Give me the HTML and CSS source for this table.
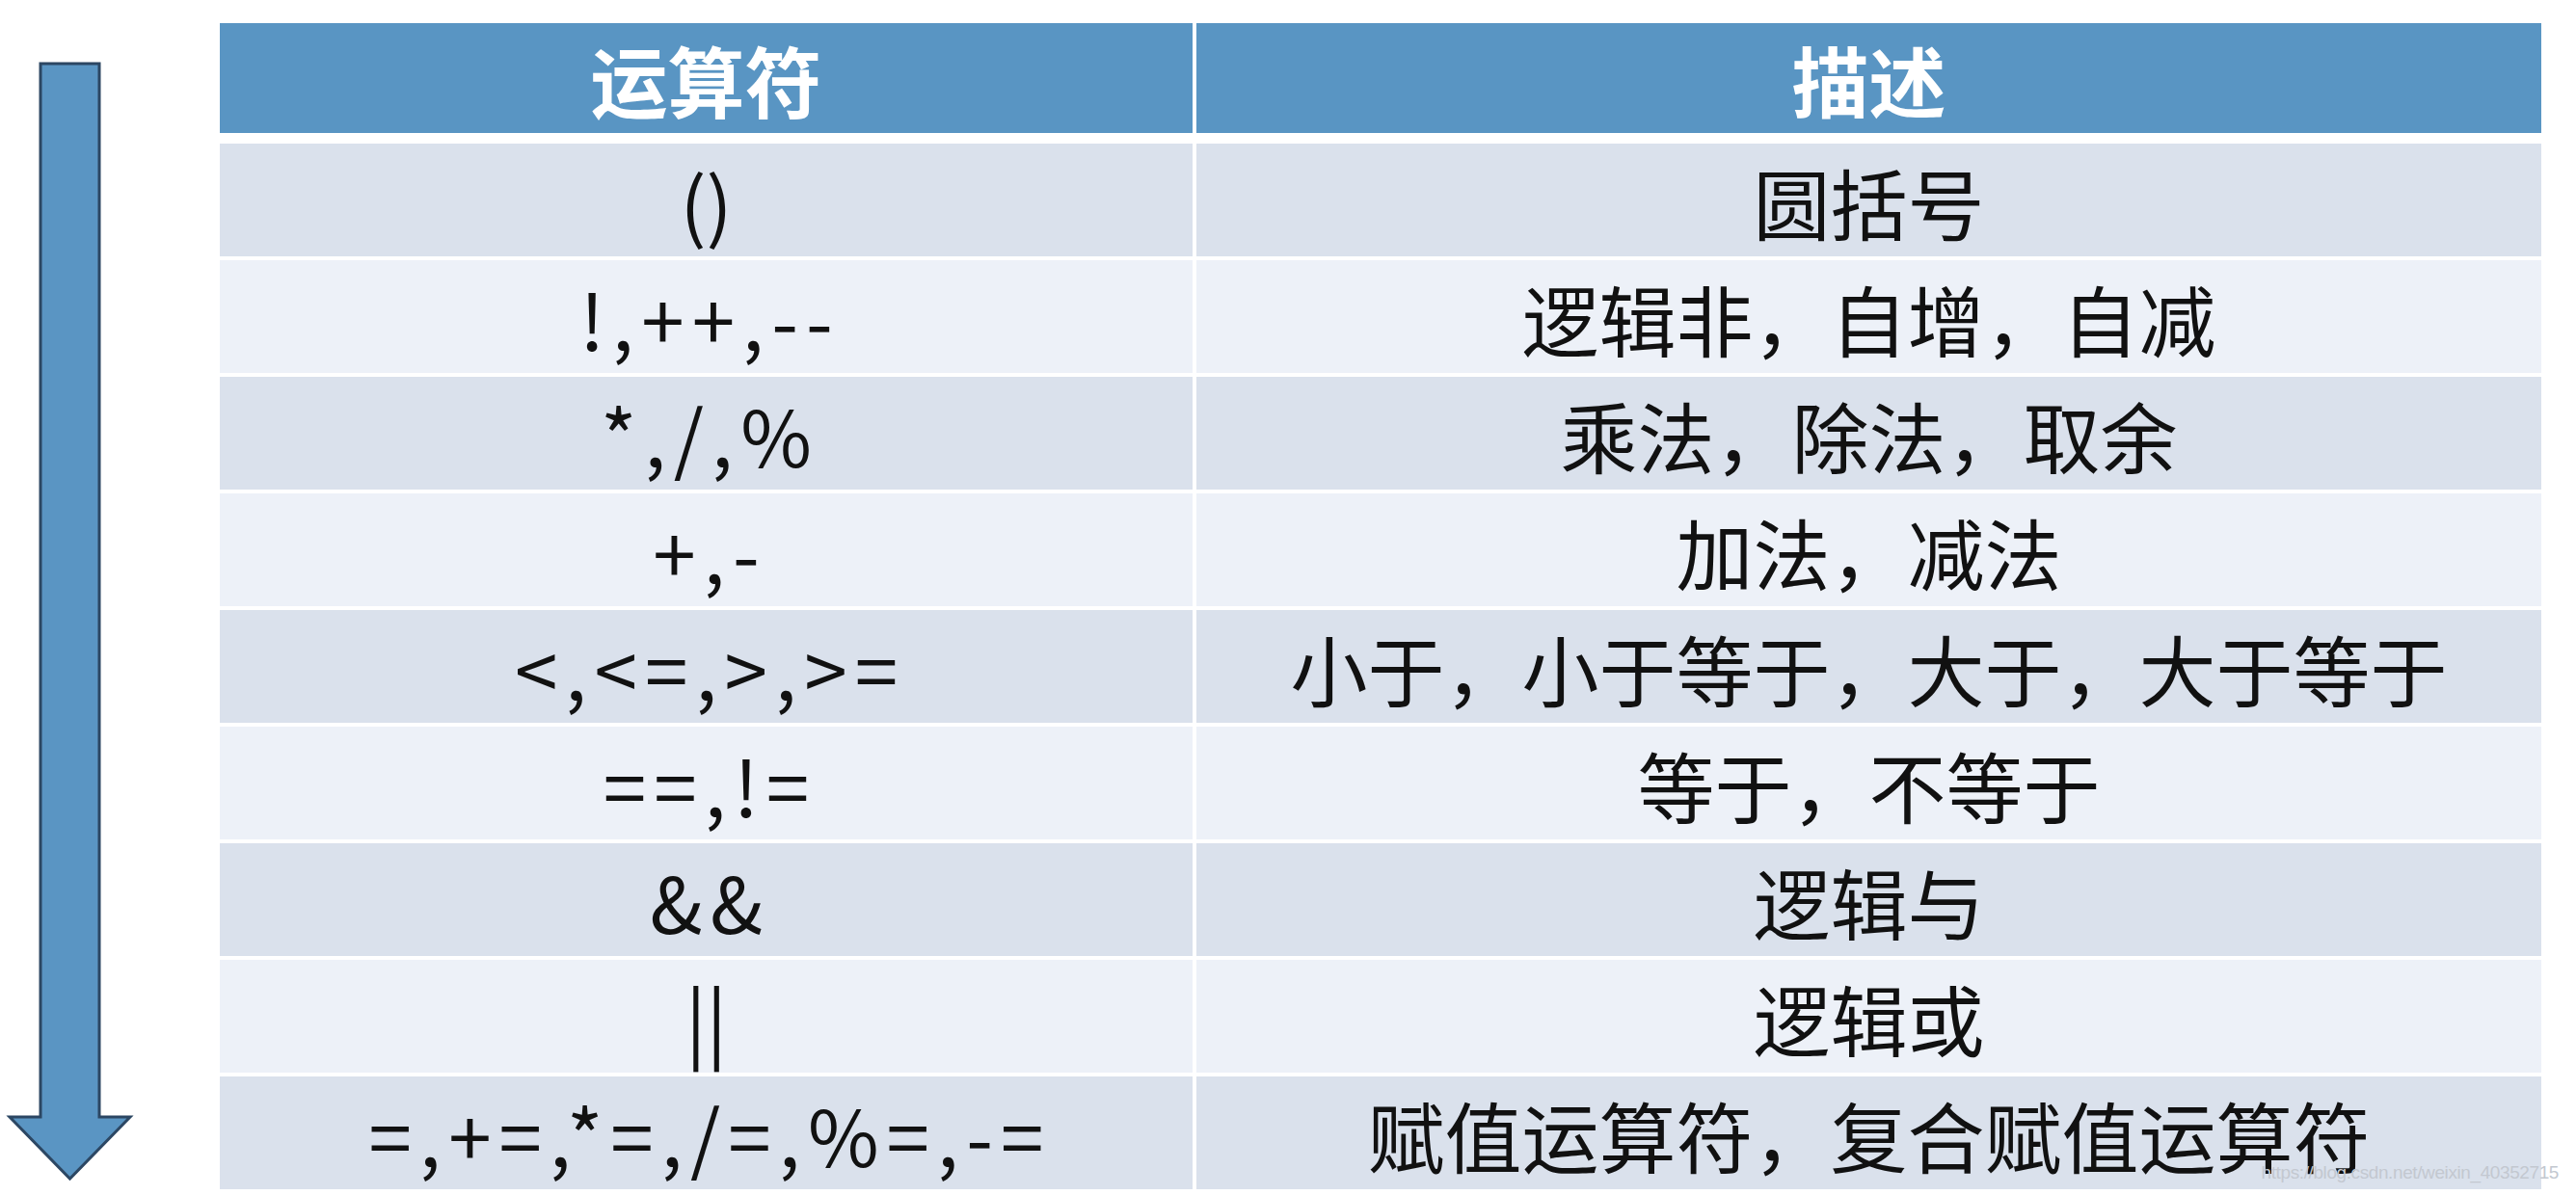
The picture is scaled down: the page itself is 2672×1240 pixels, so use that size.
FILE: index.html
```html
<!DOCTYPE html>
<html lang="zh-CN">
<head>
<meta charset="utf-8">
<title>运算符优先级</title>
<link rel="stylesheet" href="styles.css">
</head>
<body>
<div class="slide">
  <svg class="arrow" width="228" height="1240" viewBox="0 0 228 1240" aria-hidden="true">
    <polygon points="42,66 103,66 103,1159 135,1159 72.5,1223 10,1159 42,1159" fill="#5a95c3" stroke="#2c4763" stroke-width="3" stroke-linejoin="miter"/>
  </svg>
  <div class="table">
    <div class="th">运算符</div><div class="th">描述</div>
    <div class="td op tight odd">()</div><div class="td odd">圆括号</div>
    <div class="td op even">!,++,--</div><div class="td even">逻辑非，自增，自减</div>
    <div class="td op odd">*,/,%</div><div class="td odd">乘法，除法，取余</div>
    <div class="td op even">+,-</div><div class="td even">加法，减法</div>
    <div class="td op odd">&lt;,&lt;=,&gt;,&gt;=</div><div class="td odd">小于，小于等于，大于，大于等于</div>
    <div class="td op even">==,!=</div><div class="td even">等于，不等于</div>
    <div class="td op odd">&amp;&amp;</div><div class="td odd">逻辑与</div>
    <div class="td op tight even">||</div><div class="td even">逻辑或</div>
    <div class="td op odd">=,+=,*=,/=,%=,-=</div><div class="td odd">赋值运算符，复合赋值运算符</div>
  </div>
  <div class="watermark">https://blog.csdn.net/weixin_40352715</div>
</div>
</body>
</html>
```
FILE: styles.css
```css
html, body {
  margin: 0;
  padding: 0;
  background: #ffffff;
}
.slide {
  position: relative;
  width: 2672px;
  height: 1240px;
  display: flex;
  align-items: flex-start;
  font-family: "Noto Sans CJK SC", "Microsoft YaHei", sans-serif;
  overflow: hidden;
}
.arrow {
  flex: 0 0 228px;
  display: block;
}
.table {
  margin-top: 24px;
  display: grid;
  grid-template-columns: 1009px 1395px;
  grid-template-rows: 121px;
  grid-auto-rows: 117px;
  column-gap: 4px;
  row-gap: 4px;
}
.th, .td {
  display: flex;
  align-items: center;
  justify-content: center;
  font-size: 80px;
  line-height: 1;
  white-space: nowrap;
}
.th {
  background: #5995c3;
  color: #ffffff;
  font-weight: 700;
  margin-bottom: 7px;
}
.td {
  color: #111111;
}
.op {
  letter-spacing: 8px;
  padding-left: 8px;
}
.op.tight {
  letter-spacing: 0;
  padding-left: 0;
}
.odd { background: #dae1ec; }
.even { background: #edf1f8; }
.watermark {
  position: absolute;
  right: 18px;
  bottom: 12px;
  font-family: "Liberation Sans", sans-serif;
  font-size: 19px;
  letter-spacing: -0.4px;
  color: #c3c8d0;
}
```
